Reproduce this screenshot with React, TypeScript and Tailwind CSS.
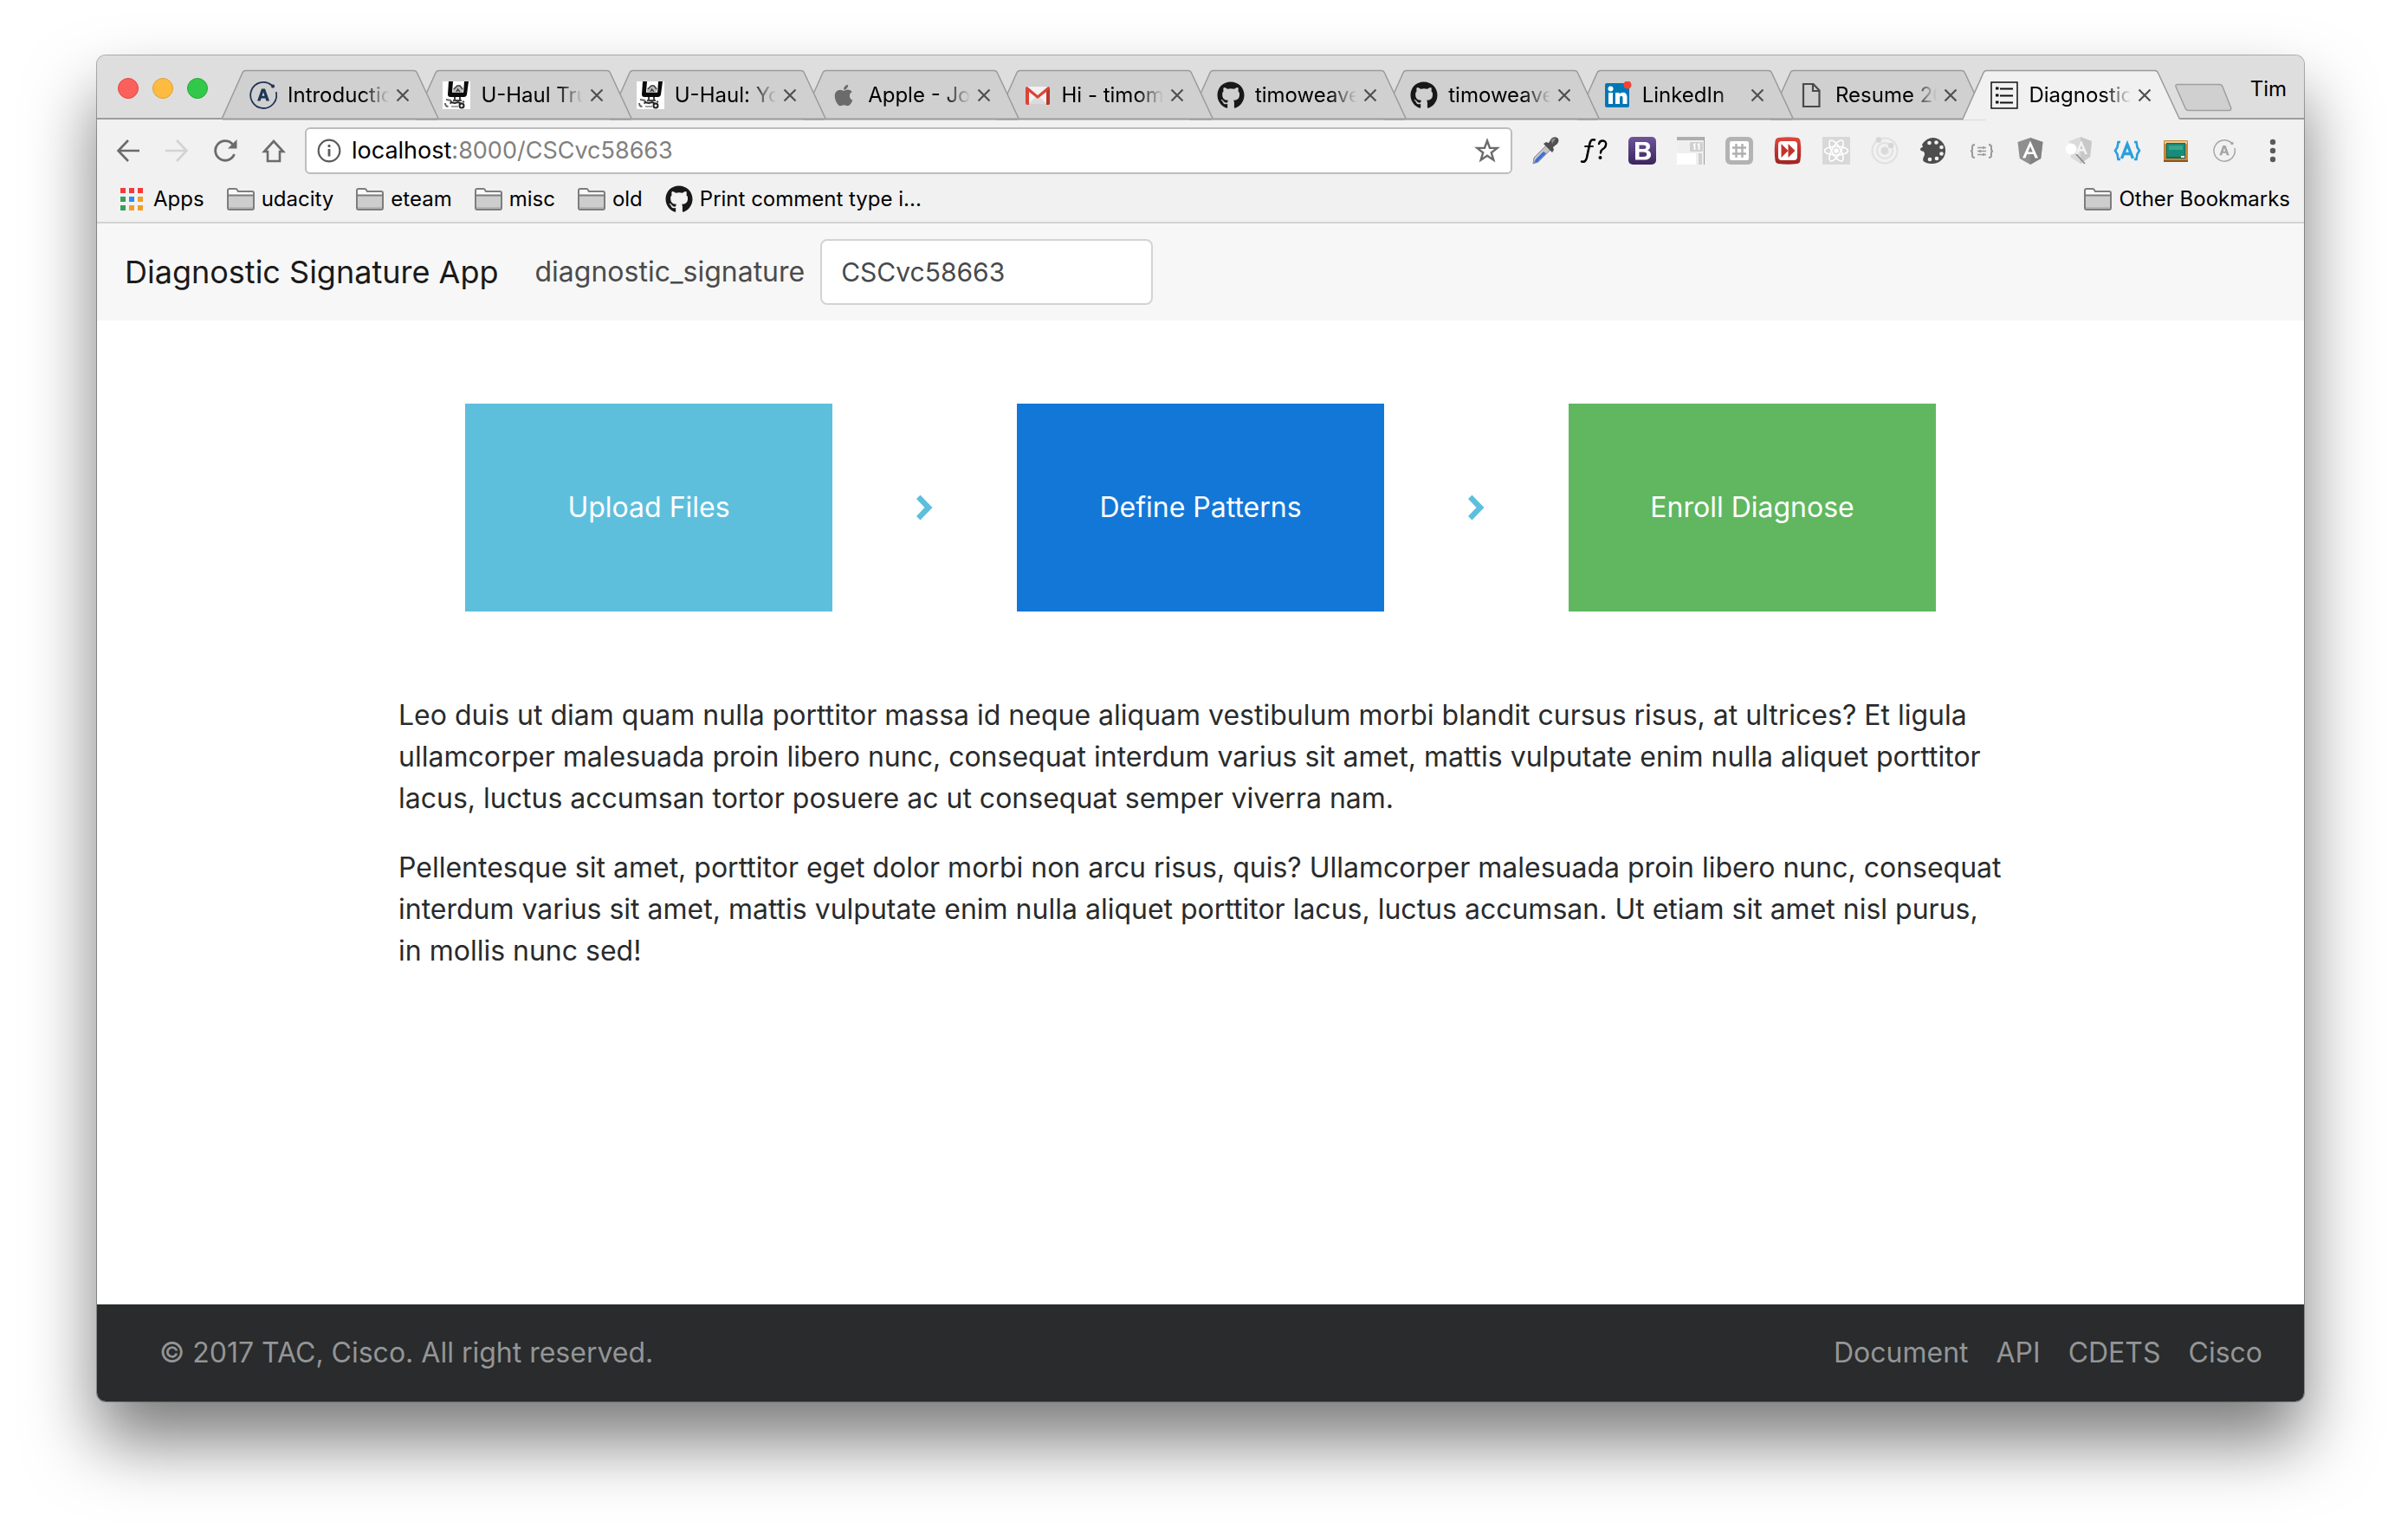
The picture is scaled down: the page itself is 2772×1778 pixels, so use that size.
import React from "react";
import { FaApple, FaGithub } from "react-icons/fa";

type Tab = { title: string; icon: React.ReactNode; active?: boolean };

const svg32 = { width: 32, height: 32, viewBox: "0 0 32 32", "aria-hidden": true } as const;

/* ---------- Favicons ---------- */

function ApolloIcon({ color = "#1d3557", size = 32 }: { color?: string; size?: number }) {
  return (
    <svg width={size} height={size} viewBox="0 0 32 32" fill="none" aria-hidden="true">
      <path d="M25.5 4.2A15 15 0 1 0 30.9 13" stroke={color} strokeWidth="1.8" strokeLinecap="round" />
      <circle cx="27" cy="5.6" r="2.1" fill={color} />
      <path fillRule="evenodd" d="M14 8.500h4l5 14h-3.600l-1-3h-4.800l-1 3H9zM16 12.300l-1.500 4.500h3z" fill={color} />
    </svg>
  );
}

function UHaulIcon() {
  return (
    <svg {...svg32}>
      <rect width="32" height="32" fill="#fff" />
      <path d="M7 0h5l-1 12q0 1 1 1h11q1 0 1.200-1L25 0h5l-2 15q-.5 3-3.500 3H9q-3 0-3-3z" fill="#0a0a0a" />
      <path d="M12 8l5-4h3l4 4-1 5H12z" fill="#bcbcbc" />
      <path d="M13 9l4-4h3l3 4M16 12l1.500-3 2.500 3" stroke="#444" strokeWidth="1.500" fill="none" />
      <path d="M14 18v5M20 18v5M12 22h10" stroke="#444" strokeWidth="2" />
      <path d="M4 21l6 1M3 25q0 4 3.500 4M10 22l-1 4" stroke="#666" strokeWidth="2" fill="none" />
      <path d="M9 24l5 1 4-1 6 3" stroke="#222" strokeWidth="2" fill="none" />
      <circle cx="22" cy="28" r="2.500" fill="#fff" stroke="#222" strokeWidth="2" />
      <path d="M10 29h8" stroke="#888" strokeWidth="1.500" />
      <path d="M23 23l2 1" stroke="#555" strokeWidth="2" />
    </svg>
  );
}

function GmailIcon() {
  return (
    <svg {...svg32}>
      <path d="M4 6h24v20H4z" fill="#f1f1f1" />
      <path d="M5 26l11-10 11 10z" fill="#dcdcdc" />
      <path d="M2 8q0-2 2-2l12 10L28 6q2 0 2 2v17q0 2-2 2h-2V12l-10 8L6 12v15H4q-2 0-2-2z" fill="#db4437" />
      <path d="M26 12l4-4v17q0 2-2 2h-2z" fill="#b9362b" />
    </svg>
  );
}

function LinkedInIcon() {
  return (
    <svg {...svg32}>
      <rect x="1" y="2" width="28" height="28" rx="2" fill="#0077b5" />
      <circle cx="7.500" cy="8.500" r="3" fill="#fff" />
      <path d="M5 13h5v13H5zM13 13h4.500v2c2-3.500 9-3.500 9 3V26h-5v-7c0-3-3.500-3-3.500 0v7h-5z" fill="#fff" />
      <circle cx="27" cy="4" r="4.600" fill="#f44336" />
    </svg>
  );
}

function PageIcon() {
  return (
    <svg {...svg32} fill="none" stroke="#4a4a4a" strokeWidth="2.200">
      <path d="M7 3h11.500l7 7.500V29H7z" />
      <path d="M18 3v8h7.500" />
    </svg>
  );
}

function ListIcon() {
  return (
    <svg {...svg32} fill="none" stroke="#111">
      <rect x="1" y="1" width="30" height="30" strokeWidth="1.500" />
      <path d="M11 8.500h15M11 16.500h15M11 24.500h15" strokeWidth="1.800" />
      <path d="M6 8h3.500M6 16h3.500M6 24h3.500" strokeWidth="3" />
    </svg>
  );
}

function GithubIcon() {
  return <FaGithub size={32} className="shrink-0 text-[#191717]" aria-hidden="true" />;
}

const tabs: Tab[] = [
  { title: "Introduction", icon: <ApolloIcon /> },
  { title: "U-Haul Truck", icon: <UHaulIcon /> },
  { title: "U-Haul: Your", icon: <UHaulIcon /> },
  { title: "Apple - Jobs", icon: <FaApple size={28} className="mx-0.5 text-[#6b6b6b]" aria-hidden="true" /> },
  { title: "Hi - timom", icon: <GmailIcon /> },
  { title: "timoweave", icon: <GithubIcon /> },
  { title: "timoweave", icon: <GithubIcon /> },
  { title: "LinkedIn", icon: <LinkedInIcon /> },
  { title: "Resume 20", icon: <PageIcon /> },
  { title: "Diagnostic", icon: <ListIcon />, active: true },
];

const stack = ["z-[9]", "z-[8]", "z-[7]", "z-[6]", "z-[5]", "z-[4]", "z-[3]", "z-[2]", "z-[1]", "z-[10]"];

function BrowserTab({ tab, index }: { tab: Tab; index: number }) {
  const fill = tab.active ? "#f1f1f1" : "#d0d0d0";
  return (
    <div className={`relative flex h-full min-w-0 flex-1 items-center pr-[34px] pl-8 not-first:-ml-7 ${stack[index]}`}>
      <svg className="absolute inset-0 h-full w-full overflow-visible" viewBox="0 0 252 57" preserveAspectRatio="none" aria-hidden="true">
        <path
          d="M0 56.500L24 3Q25 .5 28 .5H222Q225 .5 226 3L251 56.500"
          fill={fill}
          stroke="#9a9a9a"
          strokeWidth="1.500"
        />
        <path d="M1 56.500H250" stroke={tab.active ? "#f1f1f1" : "#9a9a9a"} strokeWidth="2" />
      </svg>
      <button type="button" className="relative flex min-w-0 flex-1 items-center gap-3">
        <span className="flex w-8 shrink-0 justify-center">{tab.icon}</span>
        <span className="min-w-0 flex-1 overflow-hidden text-left text-2xl whitespace-nowrap text-black [mask-image:linear-gradient(to_right,black_74%,transparent)]">
          {tab.title}
        </span>
      </button>
      <button type="button" aria-label={`Close ${tab.title}`} className="relative ml-2 shrink-0">
        <svg width="16" height="16" viewBox="0 0 16 16" stroke="#505050" strokeWidth="2.200" aria-hidden="true">
          <path d="M1.500 1.500l13 13M14.500 1.500l-13 13" />
        </svg>
      </button>
    </div>
  );
}

function TabStrip() {
  return (
    <div className="flex h-[74px] items-end border-b-2 border-[#9d9d9d] bg-[#dedede] pl-6">
      <div className="flex h-full items-center gap-4 pt-1">
        <button type="button" aria-label="Close window" className="h-6 w-6 rounded-full border border-[#e2463f] bg-[#fc605c]" />
        <button type="button" aria-label="Minimize window" className="h-6 w-6 rounded-full border border-[#e0a030] bg-[#fdbc40]" />
        <button type="button" aria-label="Zoom window" className="h-6 w-6 rounded-full border border-[#25a935] bg-[#34c84a]" />
      </div>
      <div className="-mb-0.5 ml-4 flex h-[57px] min-w-0 flex-1">
        {tabs.map((tab, i) => (
          <BrowserTab key={i} tab={tab} index={i} />
        ))}
      </div>
      <button type="button" aria-label="New tab" className="mb-1.5 -ml-2">
        <svg width="68" height="34" viewBox="0 0 68 34" aria-hidden="true">
          <path d="M4 1.500H52Q55 1.500 56 4L65.500 28Q66.500 31.500 63.500 31.500H17Q14 31.500 13 29L2 4Q1.500 1.500 4 1.500z" fill="#d0d0d0" stroke="#9f9f9f" strokeWidth="1.500" />
        </svg>
      </button>
      <button type="button" className="mx-5 self-center pt-1.5 text-2xl text-black">
        Tim
      </button>
    </div>
  );
}

/* ---------- Toolbar ---------- */

const extensions: { name: string; icon: React.ReactNode }[] = [
  {
    name: "Color picker",
    icon: (
      <svg {...svg32}>
        <path d="M3 24L17 10l5 5L8 29l-6 2z" fill="#c4c4c4" stroke="#8b8b8b" strokeWidth="1" />
        <path d="M5 26l9-9 3 2-10 10-4 1z" fill="#3c6be0" />
        <path d="M14 8l3-2 3 1 3-5q3-3 7-1 3 3 0 7l-5 4 1 3-2 3z" fill="#505050" />
        <path d="M23 4q2-3 5-2l-4 6z" fill="#8d8d8d" />
      </svg>
    ),
  },
  {
    name: "WhatFont",
    icon: (
      <svg {...svg32} fill="none" stroke="#000" strokeLinecap="round">
        <path d="M17 3.500C12 2 11.500 7 10.500 12L8 24Q6.500 30 2 28.500" strokeWidth="2.600" />
        <path d="M6 11h9" strokeWidth="1.800" />
        <path d="M22 8q1-4 5-3.500 4 1 3 5-.5 3-4 5-2 1.500-2 4" strokeWidth="2.400" />
        <circle cx="23.500" cy="24" r="2" fill="#000" stroke="none" />
      </svg>
    ),
  },
  {
    name: "Bootstrap",
    icon: (
      <svg {...svg32}>
        <defs>
          <linearGradient id="bs" x1="0" y1="0" x2="0" y2="1">
            <stop offset="0" stopColor="#6f5499" />
            <stop offset="1" stopColor="#3b2560" />
          </linearGradient>
        </defs>
        <rect width="32" height="32" rx="5" fill="url(#bs)" />
        <path
          fillRule="evenodd"
          fill="#fff"
          d="M8 6h10c5 0 7 2 7 5 0 2.500-1.300 3.800-3 4.500 2.500.6 4 2.300 4 5 0 4-3 6-7.500 6H8zM12.500 9.500v4.500h4.500c2.500 0 3.500-.8 3.500-2.300S19.500 9.500 17 9.500zM12.500 17.500V23h5c2.500 0 3.800-1 3.800-2.800s-1.300-2.700-3.800-2.700z"
        />
      </svg>
    ),
  },
  {
    name: "Window resizer",
    icon: (
      <svg {...svg32}>
        <rect width="32" height="32" fill="#efefef" />
        <rect width="32" height="4" fill="#aeaeae" />
        <rect x="31" width="1" height="32" fill="#9d9d9d" />
        <rect x="0" y="19" width="22" height="13" fill="#fff" />
        <rect x="25" y="19" width="4" height="13" fill="#d0d0d0" />
        <rect x="15" y="6" width="15" height="11" rx="1.500" fill="#d0d0d0" />
        <path d="M19 9.500l1.500-1V15M24 9.500l1.500-1V15" stroke="#fff" strokeWidth="1.800" fill="none" />
      </svg>
    ),
  },
  {
    name: "Grid",
    icon: (
      <svg {...svg32}>
        <rect width="32" height="32" rx="6" fill="#b3b3b3" />
        <rect x="5" y="5" width="22" height="22" rx="2" fill="#fff" />
        <path d="M12.500 8v16M19.500 8v16M8 12.500h16M8 19.500h16" stroke="#b0b0b0" strokeWidth="2.400" />
      </svg>
    ),
  },
  {
    name: "Fast forward",
    icon: (
      <svg {...svg32}>
        <defs>
          <linearGradient id="ff" x1="0" y1="0" x2="0" y2="1">
            <stop offset="0" stopColor="#e0463c" />
            <stop offset="1" stopColor="#9c241f" />
          </linearGradient>
        </defs>
        <path d="M5 1Q16-.5 27 1q3 .5 3.500 4 1.500 11 0 22-.5 3.500-3.500 4-11 1.500-22 0-3-.5-3.500-4-1.500-11 0-22Q2 1.500 5 1z" fill="url(#ff)" />
        <rect x="5" y="5" width="22" height="22" rx="4" fill="#fff" />
        <path d="M8.500 8l8 8-8 8zM16.500 8l8 8-8 8z" fill="#c0342c" />
      </svg>
    ),
  },
  {
    name: "React",
    icon: (
      <svg {...svg32}>
        <rect width="32" height="32" rx="1" fill="#d8d8d8" />
        <g fill="none" stroke="#fff" strokeWidth="1.600">
          <ellipse cx="16" cy="16" rx="13.500" ry="5" />
          <ellipse cx="16" cy="16" rx="13.500" ry="5" transform="rotate(60 16 16)" />
          <ellipse cx="16" cy="16" rx="13.500" ry="5" transform="rotate(120 16 16)" />
        </g>
        <circle cx="16" cy="16" r="2.800" fill="#fff" />
      </svg>
    ),
  },
  {
    name: "Orbit",
    icon: (
      <svg {...svg32} fill="none" stroke="#e0e0e0" strokeWidth="2">
        <circle cx="16" cy="16" r="14.500" />
        <circle cx="16" cy="16" r="9" />
        <circle cx="16" cy="16" r="4.500" fill="#dadada" stroke="none" />
        <circle cx="9" cy="3.500" r="3.300" fill="#d6d6d6" stroke="none" />
        <circle cx="23" cy="10" r="3.300" fill="#d6d6d6" stroke="none" />
      </svg>
    ),
  },
  {
    name: "Palette",
    icon: (
      <svg {...svg32}>
        <path d="M16 1A15 15 0 1 1 14 31Q8 31 4.500 28 3.500 25 5.500 22 7 18 4 16.500 1 17 1 13.500L4 11.500 3 9Q8 1 16 1z" fill="#4d4d4d" />
        <g fill="#f1f1f1">
          <circle cx="11.500" cy="7" r="2.300" />
          <circle cx="19.500" cy="6.500" r="2.300" />
          <circle cx="25.500" cy="12" r="2.300" />
          <circle cx="25.500" cy="19.500" r="2.300" />
          <circle cx="20" cy="25" r="2.300" />
          <circle cx="12" cy="26" r="2.300" />
        </g>
      </svg>
    ),
  },
  {
    name: "Settings",
    icon: (
      <svg {...svg32} fill="none" stroke="#9a9a9a" strokeWidth="2">
        <path d="M8 9Q5 9 5 11.500V14.500Q5 16.500 3 16.500q2 0 2 2v3Q5 24 8 24M24 9q3 0 3 2.500V14.500q0 2 2 2-2 0-2 2v3q0 2.500-3 2.500" />
        <path d="M11 12.500h10M11 16.500h10M11 20.500h10M18 11v3M14 15v3M18 19v3" strokeWidth="1.600" />
      </svg>
    ),
  },
  {
    name: "Angular",
    icon: (
      <svg {...svg32}>
        <path d="M16 1l14.500 5-2.300 19L16 32 3.800 25 1.500 6z" fill="#8f8f8f" />
        <path d="M16 1l14.500 5-2.300 19L16 32z" fill="#828282" />
        <path fillRule="evenodd" d="M16 4.500L7 24.500h3.400l1.800-4.500h7.600l1.800 4.500H25zm0 6.500l2.700 6.400h-5.400z" fill="#fff" />
      </svg>
    ),
  },
  {
    name: "Angular inspector",
    icon: (
      <svg {...svg32}>
        <path d="M18 0l13 5-2 18-11 8-11-7L5 5z" fill="#dadada" />
        <path d="M18 0l13 5-2 18-11 8z" fill="#c8c8c8" />
        <path fillRule="evenodd" d="M19 4l-7 16h3l1.300-3.500h5.400L23 20h3zm0 6l1.800 4h-3.600z" fill="#f3f3f3" />
        <circle cx="7" cy="14" r="6.500" fill="#fff" />
        <path d="M13 20l10 11" stroke="#8c8c8c" strokeWidth="1.800" />
      </svg>
    ),
  },
  {
    name: "Angular brackets",
    icon: (
      <svg {...svg32} fill="none" stroke="#2a9fdb">
        <path d="M8 6H5.500L4.500 12 2 16l2.500 4 1 6H8M24 6h2.500l1 6 2.500 4-2.500 4-1 6H24" strokeWidth="2.600" />
        <path d="M9.500 25L16 8.500 22.500 25M12 19.500h8" strokeWidth="3.400" />
      </svg>
    ),
  },
  {
    name: "Blackboard",
    icon: (
      <svg {...svg32}>
        <rect x="2" y="4" width="28" height="25" rx="1" fill="#c98432" />
        <rect x="3" y="5" width="26" height="3" fill="#efc88a" />
        <rect x="5" y="7" width="22" height="18" fill="#17685a" />
        <rect x="6" y="8" width="20" height="15" fill="#178c78" />
        <path d="M8 10h16v5H8z" fill="#3aa58f" />
        <rect x="22" y="22" width="4" height="2" fill="#fff" />
        <rect x="2" y="27" width="28" height="2" fill="#8c5417" />
      </svg>
    ),
  },
  { name: "Apollo", icon: <span className="flex w-8 justify-center"><ApolloIcon color="#a5a5a5" size={26} /></span> },
];

function Toolbar() {
  return (
    <div className="flex h-[72px] items-center bg-[#f1f1f1] pr-5 pl-[22px]">
      <div className="flex items-center gap-7 text-[#6b6b6b]">
        <button type="button" aria-label="Back">
          <svg width="28" height="28" viewBox="0 0 28 28" fill="none" stroke="currentColor" strokeWidth="2.600" aria-hidden="true">
            <path d="M14 2L2.500 14 14 26M2.500 14H27" />
          </svg>
        </button>
        <button type="button" aria-label="Forward" className="text-[#d3d3d3]">
          <svg width="28" height="28" viewBox="0 0 28 28" fill="none" stroke="currentColor" strokeWidth="2.600" aria-hidden="true">
            <path d="M14 2l11.500 12L14 26M25.500 14H1" />
          </svg>
        </button>
        <button type="button" aria-label="Reload">
          <svg width="28" height="28" viewBox="0 0 28 28" fill="none" aria-hidden="true">
            <path d="M24.500 18A11.300 11.300 0 1 1 22.500 6.500" stroke="currentColor" strokeWidth="2.800" />
            <path d="M27.500 1v10.500H17z" fill="currentColor" />
          </svg>
        </button>
        <button type="button" aria-label="Home">
          <svg width="28" height="28" viewBox="0 0 28 28" fill="none" stroke="currentColor" strokeWidth="2.600" aria-hidden="true">
            <path d="M14 3L3 15h4v11h14V15h4z" strokeLinejoin="miter" />
          </svg>
        </button>
      </div>
      <div className="ml-[22px] flex h-[54px] min-w-0 flex-1 items-center rounded-md border-2 border-[#bdbdbd] bg-white px-3">
        <button type="button" aria-label="Site information">
          <svg width="28" height="28" viewBox="0 0 28 28" fill="none" aria-hidden="true">
            <circle cx="14" cy="14" r="12.300" stroke="#5a5a5a" strokeWidth="2.200" />
            <path d="M14 12v8.500M14 7v3" stroke="#5a5a5a" strokeWidth="2.800" />
          </svg>
        </button>
        <a href="#address" className="ml-3 flex-1 text-[27px] leading-9 text-black">
          localhost<span className="text-[#808080]">:8000/CSCvc58663</span>
        </a>
        <button type="button" aria-label="Bookmark this page">
          <svg width="30" height="30" viewBox="0 0 30 30" fill="none" stroke="#6b6b6b" strokeWidth="2.400" aria-hidden="true">
            <path d="M15 3.500l3 8.200 8.700.2-6.900 5.400 2.500 8.400L15 20.700l-7.300 5 2.500-8.400-6.900-5.400 8.700-.2z" />
          </svg>
        </button>
      </div>
      <div className="ml-[22px] flex items-center gap-6">
        {extensions.map((e) => (
          <button key={e.name} type="button" aria-label={e.name} className="h-8 w-8">
            {e.icon}
          </button>
        ))}
        <button type="button" aria-label="Menu" className="flex w-8 justify-center">
          <svg width="8" height="28" viewBox="0 0 8 28" fill="#5a5a5a" aria-hidden="true">
            <circle cx="4" cy="4" r="3.200" />
            <circle cx="4" cy="14" r="3.200" />
            <circle cx="4" cy="24" r="3.200" />
          </svg>
        </button>
      </div>
    </div>
  );
}

/* ---------- Bookmarks ---------- */

function FolderIcon() {
  return (
    <svg width="32" height="26" viewBox="0 0 32 26" aria-hidden="true">
      <path d="M1 3Q1 1 3 1h7q1.500 0 2 1.500L13 4h16q2 0 2 2v17q0 2-2 2H3q-2 0-2-2z" fill="#fafafa" stroke="#7d7d7d" strokeWidth="2" />
      <path d="M2 9h28v15H2z" fill="#cdcdcd" />
      <path d="M2 22h28v2H2z" fill="#b5b5b5" />
      <path d="M1 8.500h30" stroke="#7d7d7d" strokeWidth="2" />
    </svg>
  );
}

function AppsIcon() {
  const colors = ["#f33b3b", "#f33b3b", "#f33b3b", "#34a05c", "#2b8cf4", "#f29e26", "#34a05c", "#f29e26", "#f29e26"];
  return (
    <svg width="26" height="26" viewBox="0 0 26 26" aria-hidden="true">
      {colors.map((c, i) => (
        <rect key={i} x={(i % 3) * 10} y={Math.floor(i / 3) * 10} width="6" height="6" fill={c} />
      ))}
    </svg>
  );
}

function BookmarksBar() {
  return (
    <nav className="flex h-12 items-start border-b-2 border-[#d3d3d3] bg-[#f1f1f1] pt-1 pr-4 pl-[27px] text-2xl leading-8 text-black">
      <div className="flex flex-1 items-center gap-[26px]">
        <a href="#apps" className="flex items-center gap-3"><AppsIcon />Apps</a>
        {["udacity", "eteam", "misc", "old"].map((name) => (
          <a key={name} href={`#${name}`} className="flex items-center gap-2"><FolderIcon />{name}</a>
        ))}
        <a href="#print" className="flex items-center gap-2"><GithubIcon />Print comment type i...</a>
      </div>
      <a href="#other" className="flex items-center gap-2"><FolderIcon />Other Bookmarks</a>
    </nav>
  );
}

/* ---------- Page ---------- */

function Chevron() {
  return (
    <svg width="20" height="30" viewBox="0 0 20 30" fill="#5ebfdd" className="justify-self-center" aria-hidden="true">
      <path d="M5.500 0.500L19.500 15 5.500 29.500 1 25l9.500-10L1 5z" />
    </svg>
  );
}

function Page() {
  return (
    <>
      <header className="flex h-28 items-center bg-[#f7f7f7] px-8">
        <a href="#home" className="text-4xl text-[#1a1a1a]">Diagnostic Signature App</a>
        <label htmlFor="signature" className="ml-[42px] text-[32px] leading-12 text-[#4b4b4b]">diagnostic_signature</label>
        <input
          id="signature"
          defaultValue="CSCvc58663"
          className="ml-[18px] h-[76px] w-96 rounded-lg border-2 border-[#d3d3d3] bg-white px-[22px] text-[30px] text-[#464a4c]"
        />
      </header>
      <main className="flex-1 bg-white text-[32px] leading-12 text-[#292b2c]">
        <section className="grid grid-cols-12 items-center pt-24 text-white">
          <button type="button" className="col-span-2 col-start-3 h-60 bg-[#5ebfdd]">Upload Files</button>
          <Chevron />
          <button type="button" className="col-span-2 h-60 bg-[#1377d7]">Define Patterns</button>
          <Chevron />
          <button type="button" className="col-span-2 h-60 bg-[#60b760]">Enroll Diagnose</button>
        </section>
        <section className="mx-auto mt-24 flex max-w-[1852px] flex-col gap-8">
          <p>
            Leo duis ut diam quam nulla porttitor massa id neque aliquam vestibulum morbi blandit cursus risus, at ultrices? Et ligula
            ullamcorper malesuada proin libero nunc, consequat interdum varius sit amet, mattis vulputate enim nulla aliquet porttitor
            lacus, luctus accumsan tortor posuere ac ut consequat semper viverra nam.
          </p>
          <p>
            Pellentesque sit amet, porttitor eget dolor morbi non arcu risus, quis? Ullamcorper malesuada proin libero nunc, consequat
            interdum varius sit amet, mattis vulputate enim nulla aliquet porttitor lacus, luctus accumsan. Ut etiam sit amet nisl purus,
            in mollis nunc sed!
          </p>
        </section>
      </main>
      <footer className="flex h-28 items-center justify-between bg-[#292b2c] pr-12 pl-[72px] text-[32px] text-[#949596]">
        <p>© 2017 TAC, Cisco. All right reserved.</p>
        <nav className="flex gap-8">
          <a href="#document">Document</a>
          <a href="#api">API</a>
          <a href="#cdets">CDETS</a>
          <a href="#cisco">Cisco</a>
        </nav>
      </footer>
    </>
  );
}

export default function App() {
  return (
    <div className="flex min-h-screen flex-col bg-white px-28 pt-16 pb-40 font-[Inter,sans-serif]">
      <div className="flex flex-1 flex-col overflow-hidden rounded-[10px] shadow-[0_0_0_1px_rgba(0,0,0,0.3),0_46px_80px_rgba(0,0,0,0.52)]">
        <TabStrip />
        <Toolbar />
        <BookmarksBar />
        <Page />
      </div>
    </div>
  );
}
